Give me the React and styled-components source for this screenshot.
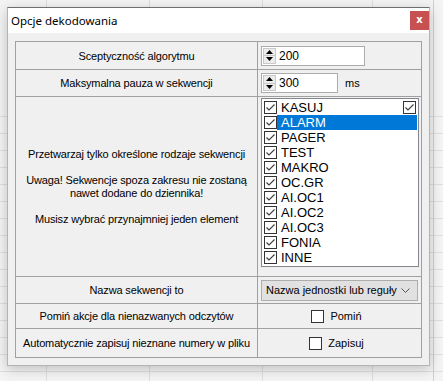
import React from 'react';
import styled, { createGlobalStyle } from 'styled-components';

const GlobalStyle = createGlobalStyle`
  html, body {
    margin: 0;
    padding: 0;
  }
  body {
    font-family: "Liberation Sans", Arial, sans-serif;
    color: #000;
  }
`;

const sequences = ['KASUJ', 'ALARM', 'PAGER', 'TEST', 'MAKRO', 'OC.GR', 'AI.OC1', 'AI.OC2', 'AI.OC3', 'FONIA', 'INNE'];

function Check({ checked }) {
  return (
    <Box>
      {checked && (
        <svg width="11" height="11" viewBox="0 0 11 11">
          <polyline points="1.5,5.5 4,8 9.5,2.5" fill="none" stroke="#3c3c3c" strokeWidth="1.1" />
        </svg>
      )}
    </Box>
  );
}

function Spin({ value, width }) {
  return (
    <SpinBox $width={width}>
      <SpinButtons>
        <SpinHalf>
          <svg width="7" height="4" viewBox="0 0 7 4">
            <polygon points="0,4 7,4 3.5,0" fill="#000" />
          </svg>
        </SpinHalf>
        <SpinHalf>
          <svg width="7" height="4" viewBox="0 0 7 4">
            <polygon points="0,0 7,0 3.5,4" fill="#000" />
          </svg>
        </SpinHalf>
      </SpinButtons>
      <SpinValue>{value}</SpinValue>
    </SpinBox>
  );
}

export default function App() {
  return (
    <Page>
      <GlobalStyle />
      <Dialog>
        <TitleBar>
          <Title>Opcje dekodowania</Title>
          <CloseButton>x</CloseButton>
        </TitleBar>
        <Body>
          <Grid>
            <LabelCell>Sceptyczność algorytmu</LabelCell>
            <ValueCell>
              <Spin value="200" width={104} />
            </ValueCell>

            <LabelCell>Maksymalna pauza w sekwencji</LabelCell>
            <ValueCell>
              <Spin value="300" width={77} />
              <Unit>ms</Unit>
            </ValueCell>

            <LabelCell>
              <Notes>
                Przetwarzaj tylko określone rodzaje sekwencji
                <br />
                <br />
                Uwaga! Sekwencje spoza zakresu nie zostaną
                <br />
                nawet dodane do dziennika!
                <br />
                <br />
                Musisz wybrać przynajmniej jeden element
              </Notes>
            </LabelCell>
            <ListCell>
              <CheckList>
                {sequences.map((name, i) => (
                  <ListItem key={name}>
                    <Check checked />
                    <ItemLabel $selected={i === 1}>{name}</ItemLabel>
                  </ListItem>
                ))}
                <AllToggle>
                  <Check checked />
                </AllToggle>
              </CheckList>
            </ListCell>

            <LabelCell>Nazwa sekwencji to</LabelCell>
            <ValueCell>
              <Combo>
                <span>Nazwa jednostki lub reguły</span>
                <svg width="9" height="5" viewBox="0 0 9 5">
                  <polyline points="0.5,0.5 4.5,4.5 8.5,0.5" fill="none" stroke="#555" strokeWidth="1" />
                </svg>
              </Combo>
            </ValueCell>

            <LabelCell>Pomiń akcje dla nienazwanych odczytów</LabelCell>
            <OptionCell>
              <Check />
              <span>Pomiń</span>
            </OptionCell>

            <LabelCell>Automatycznie zapisuj nieznane numery w pliku</LabelCell>
            <OptionCell>
              <Check />
              <span>Zapisuj</span>
            </OptionCell>
          </Grid>
        </Body>
      </Dialog>
    </Page>
  );
}

const Page = styled.div`
  min-height: 100vh;
  box-sizing: border-box;
  padding: 7px 0 0 7px;
  background-color: #f4f4f4;
  background-image:
    linear-gradient(to right, transparent 46px, #dedede 46px, #dedede 47px, transparent 47px),
    linear-gradient(to right, transparent 149px, #dedede 149px, #dedede 150px, transparent 150px),
    linear-gradient(to right, transparent 262px, #dedede 262px, #dedede 263px, transparent 263px),
    linear-gradient(to right, transparent 372px, #dedede 372px, #dedede 373px, transparent 373px),
    linear-gradient(to right, transparent 433px, #cfcfcf 433px, #cfcfcf 434px, transparent 434px),
    repeating-linear-gradient(to bottom, transparent 0, transparent 16px, #dedede 16px, #dedede 17px);
  background-position: 0 0, 0 0, 0 0, 0 0, 0 0, 0 100px;
  background-repeat: no-repeat, no-repeat, no-repeat, no-repeat, no-repeat, repeat-x;
  background-size: 100% 100%, 100% 100%, 100% 100%, 100% 100%, 100% 100%, 100% 100%;
`;

const Dialog = styled.div`
  width: 423px;
  height: 359px;
  box-sizing: border-box;
  display: flex;
  flex-direction: column;
  background: #f0f0f0;
  border: 1px solid #b4b4b4;
  border-top-color: #6e6e6e;
  box-shadow: 0 3px 12px rgba(0, 0, 0, 0.22);
`;

const TitleBar = styled.div`
  height: 25px;
  flex: none;
  display: flex;
  align-items: center;
  justify-content: space-between;
  padding-left: 3px;
  background: #fff;
`;

const Title = styled.span`
  font-family: "Noto Sans", "Open Sans", sans-serif;
  font-size: 11.5px;
  color: #000;
`;

const CloseButton = styled.div`
  width: 19px;
  height: 19px;
  display: flex;
  align-items: center;
  justify-content: center;
  background: #c75050;
  color: #fff;
  font-family: "DejaVu Sans", sans-serif;
  font-weight: bold;
  font-size: 10px;
  line-height: 1;
  padding-bottom: 2px;
  box-sizing: border-box;
`;

const Body = styled.div`
  flex: 1;
  padding: 8px 0 0 7px;
`;

const Grid = styled.div`
  display: grid;
  width: 407px;
  box-sizing: border-box;
  grid-template-columns: 241px 163px;
  grid-template-rows: 27px 26px 179px 26px 24px 28px;
  gap: 1px;
  background: #a0a0a0;
  border: 1px solid #a0a0a0;
`;

const Cell = styled.div`
  background: #f0f0f0;
  display: flex;
  align-items: center;
  font-size: 11px;
`;

const LabelCell = styled(Cell)`
  justify-content: center;
  text-align: center;
  letter-spacing: -0.15px;
`;

const ValueCell = styled(Cell)`
  padding-left: 3px;
`;

const ListCell = styled(Cell)`
  align-items: flex-start;
  padding: 1px 0 0 3px;
`;

const OptionCell = styled(Cell)`
  justify-content: center;
  gap: 6px;
  padding-right: 6px;
`;

const Notes = styled.div`
  line-height: 13px;
  font-size: 11px;
`;

const SpinBox = styled.div`
  width: ${(p) => p.$width}px;
  height: 20px;
  box-sizing: border-box;
  display: flex;
  align-items: center;
  background: #fff;
  border: 1px solid #acacac;
`;

const SpinButtons = styled.div`
  width: 13px;
  height: 16px;
  margin-left: 1px;
  display: flex;
  flex-direction: column;
`;

const SpinHalf = styled.div`
  flex: 1;
  display: flex;
  align-items: center;
  justify-content: center;
  background: #ececec;
  border: 1px solid #c9c9c9;
  & + & {
    border-top: none;
  }
`;

const SpinValue = styled.span`
  margin-left: 3px;
  font-size: 12px;
`;

const Unit = styled.span`
  margin-left: 7px;
  font-size: 11px;
`;

const CheckList = styled.div`
  position: relative;
  width: 158px;
  height: 169px;
  box-sizing: border-box;
  padding-top: 1px;
  background: #fff;
  border: 1px solid #828790;
`;

const ListItem = styled.div`
  height: 15px;
  display: flex;
  align-items: center;
  padding-left: 2px;
  padding-right: 1px;
`;

const ItemLabel = styled.span`
  flex: 1;
  height: 15px;
  line-height: 15px;
  padding-left: 4px;
  font-size: 13px;
  background: ${(p) => (p.$selected ? '#0078d7' : 'transparent')};
  color: ${(p) => (p.$selected ? '#fff' : '#000')};
`;

const AllToggle = styled.div`
  position: absolute;
  top: 2px;
  right: 2px;
`;

const Box = styled.span`
  width: 13px;
  height: 13px;
  flex: none;
  box-sizing: border-box;
  display: inline-flex;
  align-items: center;
  justify-content: center;
  background: #fff;
  border: 1px solid #333;
`;

const Combo = styled.div`
  width: 157px;
  height: 21px;
  box-sizing: border-box;
  display: flex;
  align-items: center;
  justify-content: space-between;
  padding: 0 7px 0 4px;
  background: #e1e1e1;
  border: 1px solid #adadad;
  font-size: 11px;
`;
